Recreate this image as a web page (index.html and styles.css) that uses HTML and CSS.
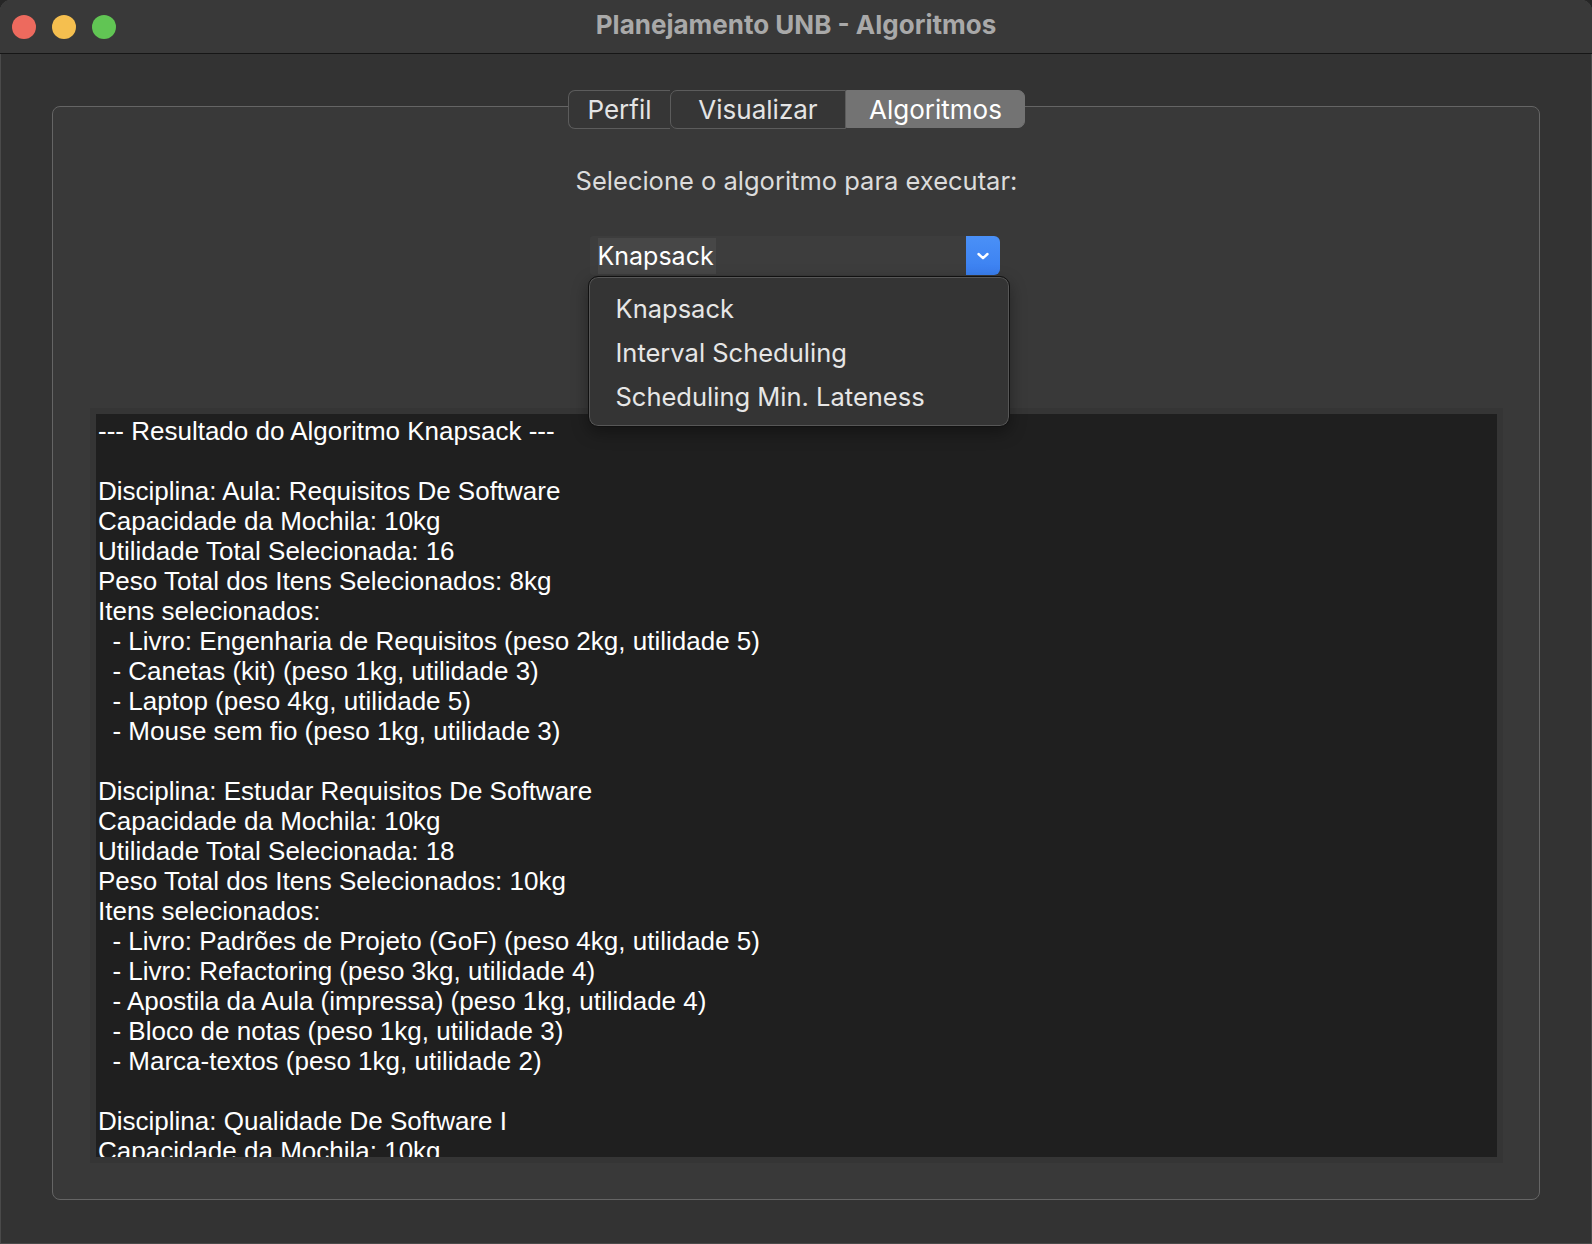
FILE: index.html
```html
<!DOCTYPE html>
<html lang="pt">
<head>
<meta charset="utf-8">
<title>Planejamento UNB - Algoritmos</title>
<link rel="stylesheet" href="styles.css">
</head>
<body>
<div class="window">
  <header class="titlebar">
    <div class="lights">
      <span class="light red"></span>
      <span class="light yellow"></span>
      <span class="light green"></span>
    </div>
    <div class="title">Planejamento UNB - Algoritmos</div>
    <div></div>
  </header>
  <main class="content">
    <section class="groupbox">
      <nav class="tabs">
        <span class="tab">Perfil</span>
        <span class="tab">Visualizar</span>
        <span class="tab active">Algoritmos</span>
      </nav>
      <div class="label">Selecione o algoritmo para executar:</div>
      <div class="combo">
        <div class="combo-field"><span class="combo-text">Knapsack</span></div>
        <div class="combo-btn">
          <svg width="14" height="10" viewBox="0 0 14 10"><path d="M2.5 3 L7 7.2 L11.5 3" fill="none" stroke="#fff" stroke-width="2.4" stroke-linecap="round" stroke-linejoin="round"/></svg>
        </div>
        <div class="popup">
          <div class="item">Knapsack</div>
          <div class="item">Interval Scheduling</div>
          <div class="item">Scheduling Min. Lateness</div>
        </div>
      </div>
      <div class="output-frame">
        <pre class="output">--- Resultado do Algoritmo Knapsack ---

Disciplina: Aula: Requisitos De Software
Capacidade da Mochila: 10kg
Utilidade Total Selecionada: 16
Peso Total dos Itens Selecionados: 8kg
Itens selecionados:
  - Livro: Engenharia de Requisitos (peso 2kg, utilidade 5)
  - Canetas (kit) (peso 1kg, utilidade 3)
  - Laptop (peso 4kg, utilidade 5)
  - Mouse sem fio (peso 1kg, utilidade 3)

Disciplina: Estudar Requisitos De Software
Capacidade da Mochila: 10kg
Utilidade Total Selecionada: 18
Peso Total dos Itens Selecionados: 10kg
Itens selecionados:
  - Livro: Padrões de Projeto (GoF) (peso 4kg, utilidade 5)
  - Livro: Refactoring (peso 3kg, utilidade 4)
  - Apostila da Aula (impressa) (peso 1kg, utilidade 4)
  - Bloco de notas (peso 1kg, utilidade 3)
  - Marca-textos (peso 1kg, utilidade 2)

Disciplina: Qualidade De Software I
Capacidade da Mochila: 10kg</pre>
      </div>
    </section>
  </main>
</div>
</body>
</html>
```

FILE: styles.css
```css
html, body {
  margin: 0;
  padding: 0;
  background: #262626;
}
body {
  width: 1592px;
  height: 1244px;
  overflow: hidden;
  font-family: Inter, "Noto Sans", sans-serif;
}
.window {
  width: 1592px;
  height: 1244px;
  background: #333333;
  border-radius: 11px 11px 0 0;
  overflow: hidden;
  display: flex;
  flex-direction: column;
  box-shadow: inset 0 0 0 1px #4a4a4a;
}
.titlebar {
  height: 53px;
  flex: none;
  background: #393939;
  border-bottom: 1px solid #161616;
  display: grid;
  grid-template-columns: 1fr auto 1fr;
  align-items: center;
}
.lights {
  display: flex;
  gap: 16px;
  padding-left: 12px;
}
.light {
  width: 24px;
  height: 24px;
  border-radius: 50%;
  display: block;
}
.red { background: #ed6a5e; }
.yellow { background: #f5bf4f; }
.green { background: #61c554; }
.title {
  font-weight: 700;
  font-size: 26px;
  line-height: 30px;
  color: #a9a9a9;
  padding-bottom: 3px;
}
.content {
  flex: 1 1 0;
  min-height: 0;
  padding: 52px 52px 44px 52px;
  display: flex;
}
.groupbox {
  flex: 1;
  min-height: 0;
  border: 1px solid #656565;
  border-radius: 8px;
  background: #393939;
  display: flex;
  flex-direction: column;
  align-items: center;
  padding: 0 36px 36px 37px;
}
.tabs {
  display: flex;
  margin-top: -17px;
  height: 39px;
  align-items: stretch;
  flex: none;
}
.tab {
  display: flex;
  align-items: center;
  justify-content: center;
  font-size: 26px;
  color: #e4e4e4;
  background: #363636;
  border: 1px solid #5c5c5c;
  box-sizing: border-box;
}
.tab:nth-child(1) {
  width: 102px;
  border-radius: 7px 0 0 7px;
  border-right: none;
}
.tab:nth-child(2) {
  width: 176px;
  border-radius: 7px 0 0 7px;
}
.tab.active {
  width: 179px;
  background: #737373;
  border-color: #737373;
  color: #ffffff;
  border-radius: 0 7px 7px 0;
  height: 38px;
}
.label {
  margin-top: 37px;
  font-size: 25.5px;
  line-height: 30px;
  color: #dcdcdc;
  flex: none;
}
.combo {
  position: relative;
  margin-top: 40px;
  margin-right: 4px;
  width: 410px;
  height: 39px;
  display: flex;
  flex: none;
}
.combo-field {
  flex: 1;
  background: #3d3d3d;
  display: flex;
  align-items: center;
  padding-left: 8px;
  border-radius: 3px 0 0 3px;
}
.combo-text {
  font-size: 25px;
  color: #ffffff;
  background: #474747;
  line-height: 36px;
  padding: 0 2px 0 0;
}
.combo-btn {
  width: 34px;
  background: linear-gradient(#4a90f7, #3a7ff0);
  border-radius: 0 6px 6px 0;
  display: flex;
  align-items: center;
  justify-content: center;
}
.popup {
  position: absolute;
  left: -2px;
  top: 40px;
  width: 422px;
  height: 151px;
  box-sizing: border-box;
  background: #343434;
  border: 1px solid #111111;
  box-shadow: inset 0 0 0 1px #575757, 0 6px 16px rgba(0,0,0,0.35);
  border-radius: 10px;
  padding-top: 10px;
  z-index: 5;
}
.item {
  font-size: 25.5px;
  line-height: 44px;
  color: #e6e6e6;
  padding-left: 27px;
}
.output-frame {
  align-self: stretch;
  flex: 1 1 0;
  min-height: 0;
  margin-top: 133px;
  background: #353535;
  padding: 6px;
  display: flex;
}
.output {
  flex: 1;
  min-height: 0;
  height: 100%;
  box-sizing: border-box;
  margin: 0;
  background: #1f1f1f;
  color: #ffffff;
  font-family: "Liberation Sans", Arial, sans-serif;
  font-size: 26px;
  line-height: 30px;
  padding: 2px 2px;
  overflow: hidden;
  white-space: pre;
}
```
